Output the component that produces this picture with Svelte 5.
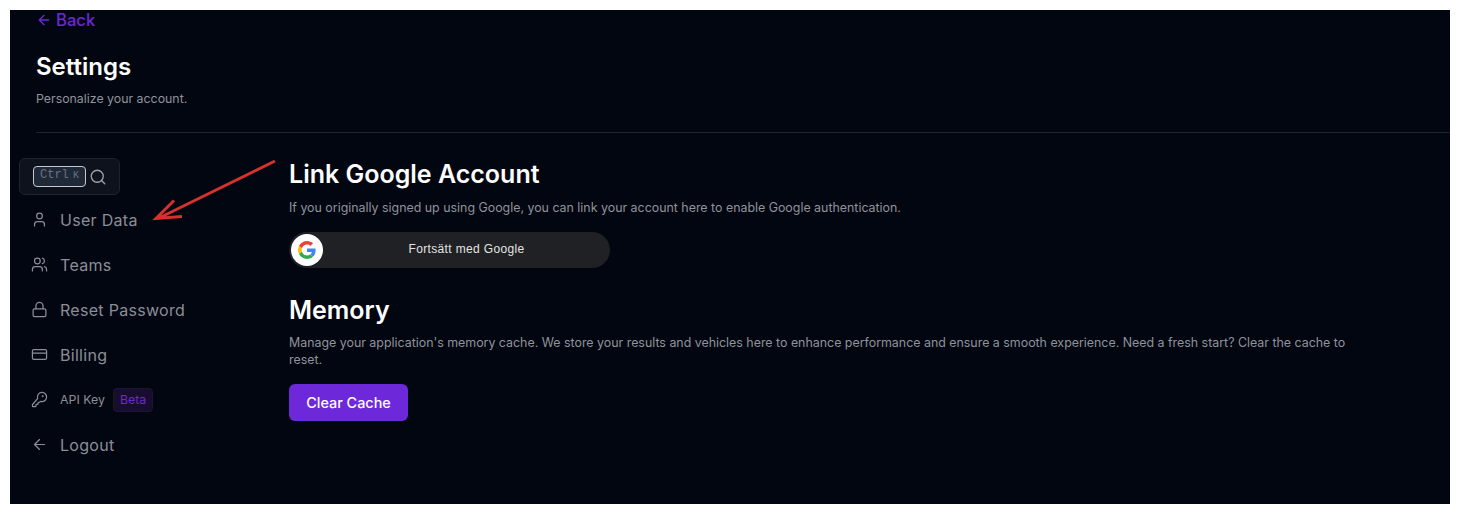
<script lang="ts">
  const menu = [
    { label: "User Data", icon: "user" },
    { label: "Teams", icon: "users" },
    { label: "Reset Password", icon: "lock" },
    { label: "Billing", icon: "card" },
    { label: "API Key", icon: "key", small: true, badge: "Beta" },
    { label: "Logout", icon: "arrow" },
  ];
</script>

<div class="frame">
  <header class="head">
    <a class="back" href="#back">
      <svg width="16" height="16" viewBox="0 0 24 24" class="ico"><path d="M19 12H5M12 19l-7-7 7-7" /></svg>
      Back
    </a>
    <h1>Settings</h1>
    <p class="sub">Personalize your account.</p>
  </header>
  <hr />

  <div class="body">
    <aside class="side">
      <div class="search">
        <kbd><span>Ctrl</span><small>K</small></kbd>
        <svg width="18" height="18" viewBox="0 0 24 24" class="ico thin"><circle cx="11" cy="11" r="8" /><path d="m21 21-4.3-4.3" /></svg>
      </div>
      <nav>
        {#each menu as item}
          <a class="item" class:small={item.small} href="#item">
            <svg width="17" height="17" viewBox="0 0 24 24" class="ico thin">
              {#if item.icon === "user"}
                <path d="M19 21v-2a4 4 0 0 0-4-4H9a4 4 0 0 0-4 4v2" /><circle cx="12" cy="7" r="4" />
              {:else if item.icon === "users"}
                <path d="M16 21v-2a4 4 0 0 0-4-4H6a4 4 0 0 0-4 4v2" /><circle cx="9" cy="7" r="4" /><path d="M22 21v-2a4 4 0 0 0-3-3.87" /><path d="M16 3.13a4 4 0 0 1 0 7.75" />
              {:else if item.icon === "lock"}
                <rect x="3" y="11" width="18" height="11" rx="2" /><path d="M7 11V7a5 5 0 0 1 10 0v4" />
              {:else if item.icon === "card"}
                <rect x="2" y="5" width="20" height="14" rx="2" /><path d="M2 10h20" />
              {:else if item.icon === "key"}
                <path d="M2.6 18.4A2 2 0 0 0 2 19.8V21a1 1 0 0 0 1 1h3a1 1 0 0 0 1-1v-1a1 1 0 0 1 1-1h1a1 1 0 0 0 1-1v-1a1 1 0 0 1 1-1h.2a2 2 0 0 0 1.4-.6l.8-.8a6.5 6.5 0 1 0-4-4z" /><circle cx="16.5" cy="7.5" r=".5" />
              {:else}
                <path d="M19 12H5M12 19l-7-7 7-7" />
              {/if}
            </svg>
            <span>{item.label}</span>
            {#if item.badge}<em class="badge">{item.badge}</em>{/if}
          </a>
        {/each}
      </nav>
    </aside>

    <main class="content">
      <section class="google">
        <h2>Link Google Account</h2>
        <p>If you originally signed up using Google, you can link your account here to enable Google authentication.</p>
        <button class="gbtn">
          <span class="gicon">
            <svg width="18" height="18" viewBox="0 0 48 48">
              <path fill="#EA4335" d="M24 9.5c3.54 0 6.71 1.22 9.21 3.6l6.85-6.85C35.9 2.38 30.47 0 24 0 14.62 0 6.51 5.38 2.56 13.22l7.98 6.19C12.43 13.72 17.74 9.5 24 9.5z" />
              <path fill="#4285F4" d="M46.98 24.55c0-1.57-.15-3.09-.38-4.55H24v9.02h12.94c-.58 2.96-2.26 5.48-4.78 7.18l7.73 6c4.51-4.18 7.09-10.36 7.09-17.65z" />
              <path fill="#FBBC05" d="M10.53 28.59c-.48-1.45-.76-2.99-.76-4.59s.27-3.14.76-4.59l-7.98-6.19C.92 16.46 0 20.12 0 24c0 3.88.92 7.54 2.56 10.78l7.97-6.19z" />
              <path fill="#34A853" d="M24 48c6.48 0 11.93-2.13 15.89-5.81l-7.73-6c-2.15 1.45-4.92 2.3-8.16 2.3-6.26 0-11.57-4.22-13.47-9.91l-7.98 6.19C6.51 42.62 14.62 48 24 48z" />
            </svg>
          </span>
          <span class="glabel">Fortsätt med Google</span>
        </button>
      </section>

      <section class="memory">
        <h2>Memory</h2>
        <p>Manage your application's memory cache. We store your results and vehicles here to enhance performance and ensure a smooth experience. Need a fresh start? Clear the cache to reset.</p>
        <button class="clear">Clear Cache</button>
      </section>
    </main>
  </div>

  <!-- red annotation arrow drawn over the page -->
  <svg class="annot" width="140" height="80" viewBox="146 150 140 80">
    <path d="M275 161 158 218.500M174 200.500l-18 18 26-2" fill="none" stroke="#d3322e" stroke-width="3" />
  </svg>
</div>

<style>
  :global(body) {
    background: #fff;
  }

  .frame {
    position: relative;
    box-sizing: border-box;
    width: 1440px;
    height: 494px;
    margin: 10px;
    overflow: hidden;
    background: #020611;
    font-family: Inter, "Liberation Sans", sans-serif;
  }

  .ico {
    flex: none;
    fill: none;
    stroke: currentColor;
    stroke-width: 2;
    stroke-linecap: round;
    stroke-linejoin: round;
  }

  .ico.thin {
    stroke-width: 1.75;
  }

  .head {
    padding-left: 26px;
  }

  .back {
    display: flex;
    align-items: center;
    gap: 4px;
    height: 20px;
    color: #6d28d9;
    font-size: 16.6px;
    font-weight: 500;
    line-height: 20px;
    text-decoration: none;
  }

  h1 {
    margin: 21px 0 0;
    color: #fff;
    font-size: 24px;
    font-weight: 600;
    line-height: 32px;
  }

  .sub {
    margin: 7px 0 0;
    color: #90939b;
    font-size: 12.35px;
    line-height: 18px;
  }

  hr {
    height: 1px;
    margin: 24px 0 0 26px;
    border: 0;
    background: #1c2431;
  }

  .body {
    display: flex;
    padding: 25px 0 0 9px;
  }

  .side {
    width: 270px;
    flex: none;
  }

  .search {
    display: flex;
    align-items: center;
    gap: 3px;
    box-sizing: border-box;
    width: 101px;
    height: 37px;
    padding-left: 13px;
    border: 1px solid #1c2431;
    border-radius: 6px;
    background: #0d121d;
    color: #9ca3af;
  }

  kbd {
    display: flex;
    align-items: center;
    justify-content: space-between;
    box-sizing: border-box;
    width: 53px;
    height: 21px;
    padding: 0 6px 3px 6px;
    border: 1px solid #c4cad3;
    border-radius: 4px;
    background: #1f2937;
    color: #6b7280;
    font-family: "Liberation Mono", monospace;
    font-size: 12px;
    font-weight: 400;
  }

  kbd small {
    font-size: 10px;
  }

  nav {
    display: flex;
    flex-direction: column;
    margin-top: 2px;
  }

  .item {
    display: flex;
    align-items: center;
    gap: 12px;
    height: 45px;
    padding-left: 12px;
    color: #8b8e97;
    font-size: 16px;
    letter-spacing: 0.3px;
    text-decoration: none;
  }

  .item.small {
    font-size: 12.35px;
    letter-spacing: 0;
  }

  .badge {
    margin-left: -4px;
    padding: 0 6px;
    height: 22px;
    border: 1px solid #1e1338;
    border-radius: 4px;
    background: #170d2e;
    color: #6d28d9;
    font-size: 12.35px;
    font-style: normal;
    line-height: 22px;
  }

  .content {
    width: 1060px;
    margin-top: -1px;
    padding-top: 1px;
  }

  h2 {
    margin: 0;
    color: #fff;
    font-size: 25px;
    font-weight: 600;
    line-height: 32px;
  }

  .content p {
    margin: 9px 0 0;
    color: #90939b;
    font-size: 12.4px;
    line-height: 17px;
  }

  .gbtn {
    display: flex;
    align-items: center;
    width: 321px;
    height: 36px;
    margin-top: 16px;
    padding: 0 2px;
    border: 0;
    border-radius: 18px;
    background: #202124;
    color: #e3e3e3;
    font-family: "Liberation Sans", Arial, sans-serif;
    font-size: 12px;
    letter-spacing: 0.35px;
  }

  .gicon {
    display: flex;
    align-items: center;
    justify-content: center;
    width: 32px;
    height: 32px;
    flex: none;
    border-radius: 50%;
    background: #fff;
  }

  .glabel {
    flex: 1;
    padding: 0 0 2px 2px;
    text-align: center;
  }

  .memory {
    margin-top: 26px;
  }

  .memory p {
    margin-top: 8px;
  }

  .clear {
    display: block;
    width: 119px;
    height: 37px;
    margin-top: 16px;
    border: 0;
    border-radius: 6px;
    background: #6d28d9;
    color: #fff;
    font-family: inherit;
    font-size: 14.4px;
    font-weight: 500;
  }

  .annot {
    position: absolute;
    left: 136px;
    top: 140px;
  }
</style>
